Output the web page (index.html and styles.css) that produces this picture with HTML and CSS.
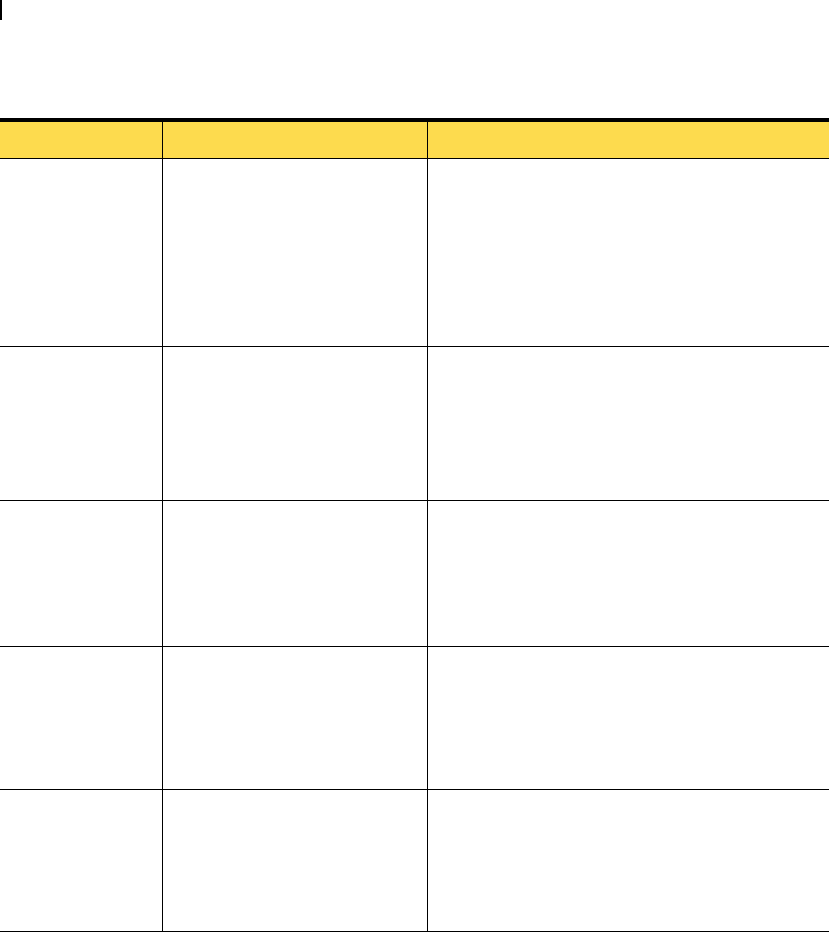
FILE: index.html
```html
<!DOCTYPE html>
<html>
<head>
<meta charset="utf-8">
<link rel="stylesheet" href="styles.css">
</head>
<body>
<div class="marker"></div>
<div class="table">
  <div class="row head">
    <div class="cell"></div><div class="cell"></div><div class="cell last"></div>
  </div>
  <div class="row r1">
    <div class="cell"></div><div class="cell"></div><div class="cell last"></div>
  </div>
  <div class="row r2">
    <div class="cell"></div><div class="cell"></div><div class="cell last"></div>
  </div>
  <div class="row r3">
    <div class="cell"></div><div class="cell"></div><div class="cell last"></div>
  </div>
  <div class="row r4">
    <div class="cell"></div><div class="cell"></div><div class="cell last"></div>
  </div>
  <div class="row r5">
    <div class="cell"></div><div class="cell"></div><div class="cell last"></div>
  </div>
</div>
</body>
</html>
```
FILE: styles.css
```css
html, body {
  margin: 0;
  padding: 0;
  background: #fff;
  font-family: "Liberation Sans", Arial, sans-serif;
}
.marker {
  width: 2px;
  height: 20px;
  background: #000;
}
.table {
  margin-top: 98px;
  width: 829px;
  border-top: 4px solid #000;
}
.row {
  display: grid;
  grid-template-columns: 163px 265px 1fr;
  border-bottom: 1px solid #000;
}
.cell {
  border-right: 1px solid #000;
}
.cell.last {
  border-right: none;
}
.head {
  background: #fddb4e;
  height: 36px;
}
.r1 { height: 187px; }
.r2 { height: 153px; }
.r3 { height: 145px; }
.r4 { height: 142px; }
.r5 { height: 141px; }
.row { box-sizing: content-box; }
```
